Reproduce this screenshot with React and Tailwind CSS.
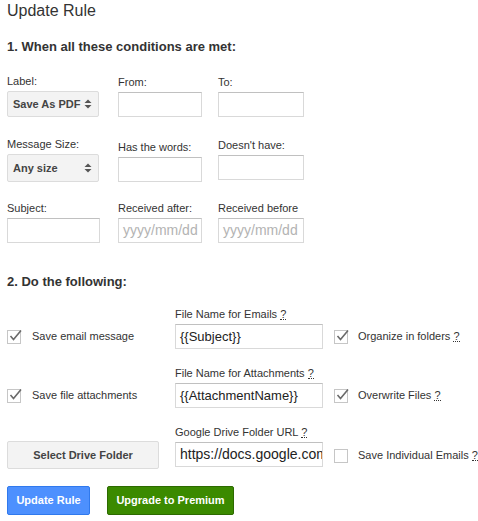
import React from "react";

const font = { fontFamily: '"Liberation Sans", Arial, sans-serif' };

const Help = () => (
  <span className="border-b border-dotted border-[#333] leading-[10px] inline-block">?</span>
);

const SelectBox = ({ value, tall }) => (
  <div
    className={`w-[92px] ${tall ? "h-[28px]" : "h-[26px]"} flex items-center justify-between pl-[5px] pr-[6px] bg-[#f3f3f3] border border-[#dcdcdc] rounded-[2px] text-[11px] font-bold text-[#444] whitespace-nowrap`}
  >
    <span>{value}</span>
    <svg width="8" height="12" viewBox="0 0 8 12">
      <path d="M4 1.5 L7.5 5 L0.5 5 Z" fill="#555" />
      <path d="M4 10.5 L7.5 7 L0.5 7 Z" fill="#555" />
    </svg>
  </div>
);

const TextBox = ({ w, placeholder, value, size = "text-[13px]" }) => (
  <div
    className={`${w} h-[25px] border border-[#d9d9d9] border-t-[#c0c0c0] bg-white flex items-center px-[4px] ${size} overflow-hidden whitespace-nowrap`}
  >
    {value ? (
      <span className="text-[#222]">{value}</span>
    ) : placeholder ? (
      <span className="text-[#b3b3b3] text-[14px]">{placeholder}</span>
    ) : null}
  </div>
);

const Field = ({ label, children, className = "" }) => (
  <div className={`flex flex-col ${className}`}>
    <div className="text-[11px] leading-[13px] text-[#333] mb-[3px] whitespace-nowrap">{label}</div>
    {children}
  </div>
);

const Check = ({ checked }) => (
  <div className="relative w-[14px] h-[14px] border border-[#c6c6c6] bg-white shrink-0">
    {checked && (
      <svg width="16" height="15" viewBox="0 0 16 15" className="absolute left-[0px] top-[-3px]">
        <path d="M2.5 8 L5.5 11.5 L13 2.5" fill="none" stroke="#6a6a6a" strokeWidth="1.6" />
      </svg>
    )}
  </div>
);

const CheckLabel = ({ checked, children, gap = "ml-[11px]" }) => (
  <div className="flex items-center h-[25px]">
    <Check checked={checked} />
    <span className={`${gap} text-[11px] text-[#333] whitespace-nowrap`}>{children}</span>
  </div>
);

export default function App() {
  return (
    <div className="w-[478px] h-[521px] bg-white pl-[7px] pt-[1px]" style={font}>
      <div className="text-[16px] leading-[20px] text-[#333]">Update Rule</div>

      <div className="mt-[18px] text-[13px] leading-[16px] font-bold text-[#333]">
        1. When all these conditions are met:
      </div>

      {/* row 1 */}
      <div className="mt-[20px] flex items-end">
        <Field label="Label:" className="w-[111px]">
          <SelectBox value="Save As PDF" />
        </Field>
        <Field label="From:" className="w-[100px]">
          <TextBox w="w-[84px]" />
        </Field>
        <Field label="To:">
          <TextBox w="w-[86px]" />
        </Field>
      </div>

      {/* row 2 */}
      <div className="mt-[21px] flex items-end">
        <Field label="Message Size:" className="w-[111px]">
          <SelectBox value="Any size" tall />
        </Field>
        <Field label="Has the words:" className="w-[100px]">
          <TextBox w="w-[84px]" />
        </Field>
        <Field label="Doesn't have:" className="mb-[2px]">
          <TextBox w="w-[86px]" />
        </Field>
      </div>

      {/* row 3 */}
      <div className="mt-[20px] flex items-end">
        <Field label="Subject:" className="w-[111px]">
          <TextBox w="w-[93px]" />
        </Field>
        <Field label="Received after:" className="w-[100px]">
          <TextBox w="w-[84px]" placeholder="yyyy/mm/dd" />
        </Field>
        <Field label="Received before">
          <TextBox w="w-[86px]" placeholder="yyyy/mm/dd" />
        </Field>
      </div>

      <div className="mt-[31px] text-[13px] leading-[16px] font-bold text-[#333]">
        2. Do the following:
      </div>

      {/* row A */}
      <div className="mt-[18px] flex items-end">
        <div className="w-[168px]">
          <CheckLabel checked>Save email message</CheckLabel>
        </div>
        <Field label={<>File Name for Emails <Help /></>}>
          <TextBox w="w-[148px]" value="{{Subject}}" />
        </Field>
        <div className="ml-[11px]">
          <CheckLabel checked gap="ml-[10px]">
            Organize in folders <Help />
          </CheckLabel>
        </div>
      </div>

      {/* row B */}
      <div className="mt-[18px] flex items-end">
        <div className="w-[168px]">
          <CheckLabel checked>Save file attachments</CheckLabel>
        </div>
        <Field label={<>File Name for Attachments <Help /></>}>
          <TextBox w="w-[148px]" value="{{AttachmentName}}" />
        </Field>
        <div className="ml-[11px]">
          <CheckLabel checked gap="ml-[10px]">
            Overwrite Files <Help />
          </CheckLabel>
        </div>
      </div>

      {/* row C */}
      <div className="mt-[18px] flex items-end">
        <div className="w-[168px]">
          <button className="w-[152px] h-[28px] bg-[#f3f3f3] border border-[#dcdcdc] rounded-[2px] text-[11px] font-bold text-[#444]">
            Select Drive Folder
          </button>
        </div>
        <Field label={<>Google Drive Folder URL <Help /></>} className="mb-[2px]">
          <TextBox w="w-[148px]" size="text-[14px]" value="https://docs.google.com" />
        </Field>
        <div className="ml-[11px] mb-[1px]">
          <CheckLabel gap="ml-[10px]">
            Save Individual Emails <Help />
          </CheckLabel>
        </div>
      </div>

      {/* bottom buttons */}
      <div className="mt-[17px] flex gap-[17px]">
        <button className="w-[83px] h-[29px] bg-[#4d90fe] border border-[#3079ed] rounded-[2px] text-white text-[11px] font-bold">
          Update Rule
        </button>
        <button className="w-[127px] h-[29px] bg-[#3b8a00] border border-[#2d6a00] rounded-[2px] text-white text-[11px] font-bold">
          Upgrade to Premium
        </button>
      </div>
    </div>
  );
}
